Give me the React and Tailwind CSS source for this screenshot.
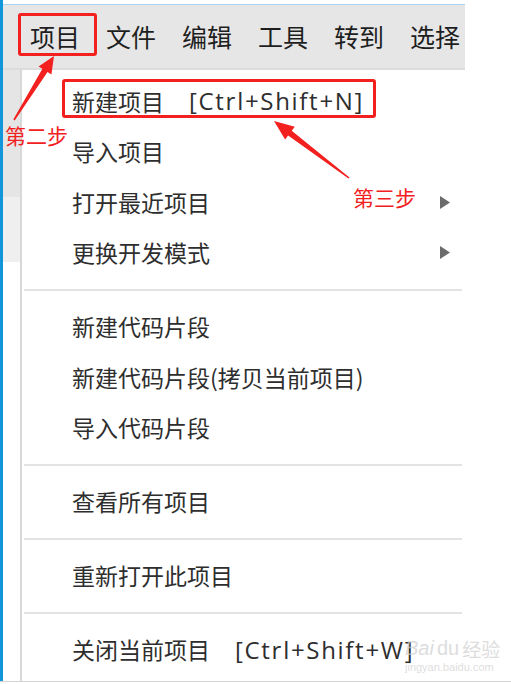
import React from "react";

function arrowPoints(tx, ty, sx, sy, headLen, headW, neckW, tailW) {
  const dx = tx - sx;
  const dy = ty - sy;
  const len = Math.hypot(dx, dy);
  const ux = dx / len;
  const uy = dy / len;
  const px = -uy;
  const py = ux;
  const bx = tx - ux * headLen;
  const by = ty - uy * headLen;
  const pts = [
    [tx, ty],
    [bx + px * headW, by + py * headW],
    [bx + px * neckW, by + py * neckW],
    [sx + px * tailW, sy + py * tailW],
    [sx - px * tailW, sy - py * tailW],
    [bx - px * neckW, by - py * neckW],
    [bx - px * headW, by - py * headW],
  ];
  return pts.map((p) => p[0].toFixed(1) + "," + p[1].toFixed(1)).join(" ");
}

function Arrow() {
  return (
    <svg width="10" height="13" viewBox="0 0 10 13">
      <polygon points="0,0 10,6.5 0,13" fill="#6b6b6b" />
    </svg>
  );
}

function Row({ children, sub }) {
  return (
    <div className="h-[50.5px] flex items-center justify-between pl-[50px] pr-[15px]">
      <div className="flex items-center text-[23px] text-[#2e2e2e] leading-none whitespace-nowrap">
        {children}
      </div>
      {sub ? <Arrow /> : null}
    </div>
  );
}

function Sep() {
  return (
    <div className="h-[23.5px] flex items-center ml-[2px] mr-[3px]">
      <div className="h-[2px] w-full bg-[#e3e3e6]" />
    </div>
  );
}

function Shortcut({ children }) {
  return (
    <span className="ml-[25px] font-['Open_Sans',sans-serif] text-[24px] tracking-[1.7px] text-[#2e2e2e]">
      {children}
    </span>
  );
}

export default function App() {
  const cjk = "font-['Noto_Sans_CJK_SC',sans-serif]";
  return (
    <div className={`relative w-[511px] h-[684px] bg-white overflow-hidden ${cjk}`}>
      <div className="flex flex-col h-[684px]">
        <div className="flex h-[681px]">
          <div className="w-[465px] h-full flex flex-col border-l-[3px] border-[#1296db]">
            <div className="h-[4px] bg-white" />
            <div className="h-[1px] bg-[#a8d4ef]" />
            <div className="h-[63px] bg-[#e6e6e6] flex items-center pl-[27px] gap-[26px] text-[25px] text-[#1e1e1e] leading-none whitespace-nowrap overflow-hidden">
              <span>项目</span>
              <span>文件</span>
              <span>编辑</span>
              <span>工具</span>
              <span>转到</span>
              <span>选择</span>
            </div>
            <div className="h-[2px] bg-[#dcdcdc]" />
            <div className="flex-1 flex">
              <div className="w-[17px] flex flex-col">
                <div className="h-[127px] bg-[#e5e5e5]" />
                <div className="h-[65px] bg-[#efefef]" />
                <div className="flex-1 bg-white" />
              </div>
              <div className="flex-1 flex flex-col border-l-2 border-[#d8d8d8] bg-white pt-[6px]">
                <Row>
                  新建项目<Shortcut>[Ctrl+Shift+N]</Shortcut>
                </Row>
                <Row>导入项目</Row>
                <Row sub>打开最近项目</Row>
                <Row sub>更换开发模式</Row>
                <Sep />
                <Row>新建代码片段</Row>
                <Row>新建代码片段(拷贝当前项目)</Row>
                <Row>导入代码片段</Row>
                <Sep />
                <Row>查看所有项目</Row>
                <Sep />
                <Row>重新打开此项目</Row>
                <Sep />
                <Row>
                  关闭当前项目<Shortcut>[Ctrl+Shift+W]</Shortcut>
                </Row>
              </div>
            </div>
          </div>
          <div className="flex-1 bg-white" />
        </div>
        <div className="h-[1px] bg-[#d4d4d4]" />
        <div className="flex-1 bg-white" />
      </div>

      {/* annotations */}
      <div className="absolute left-[18px] top-[13px] w-[79px] h-[43px] border-[3px] border-[#f2201e] rounded-[3px]" />
      <div className="absolute left-[62px] top-[79px] w-[314px] h-[39px] border-[3px] border-[#f2201e] rounded-[3px]" />
      <svg className="absolute left-0 top-0 pointer-events-none" width="511" height="684">
        <polygon points={arrowPoints(54, 56, 14, 120, 17, 7.5, 3, 0.8)} fill="#f2201e" />
        <polygon points={arrowPoints(274, 121, 349, 178, 20, 8, 3, 0.8)} fill="#f2201e" />
      </svg>
      <div className="absolute left-[5px] top-[125px] text-[21px] leading-none text-[#f2201e]">第二步</div>
      <div className="absolute left-[353px] top-[187px] text-[21px] leading-none text-[#f2201e]">第三步</div>

      {/* watermark */}
      <div className="absolute left-[405px] top-[638px] flex flex-col items-start opacity-70 whitespace-nowrap">
        <div className="flex items-center gap-[3px] text-[20px] leading-none text-[#cfcfcf] font-['Liberation_Sans',sans-serif] whitespace-nowrap">
          <span className="italic">Bai</span>
          <span>du</span>
          <span className={`${cjk} text-[19px]`}>经验</span>
        </div>
        <div className="text-[11px] leading-none mt-[4px] text-[#d2d2d2] font-['Liberation_Sans',sans-serif] whitespace-nowrap">
          jingyan.baidu.com
        </div>
      </div>
    </div>
  );
}
